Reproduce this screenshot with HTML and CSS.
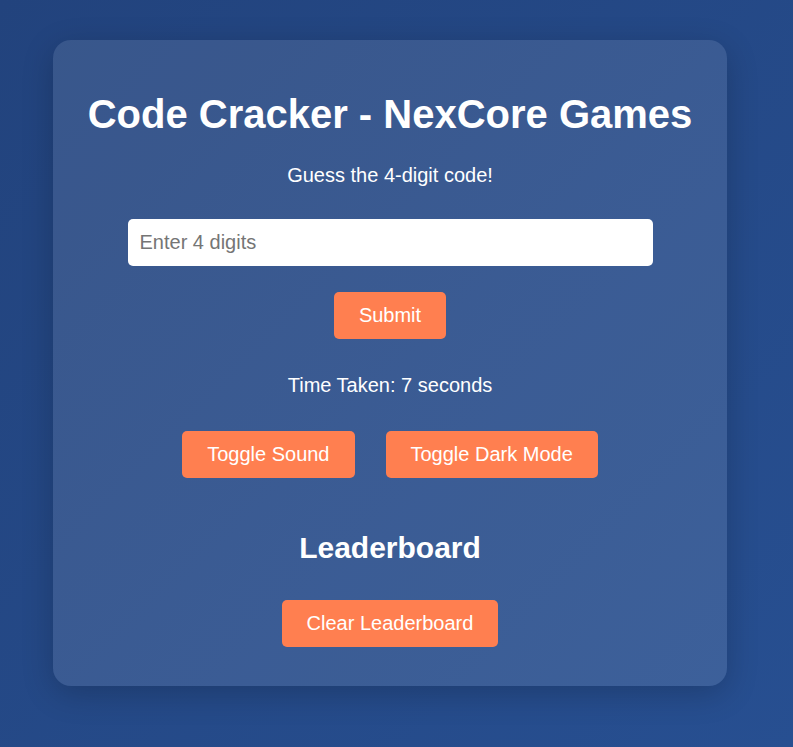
FILE: index.html
```html
<!DOCTYPE html>
<html lang="en">
<head>
<meta charset="utf-8">
<title>Code Cracker - NexCore Games</title>
<link rel="stylesheet" href="styles.css">
</head>
<body>
<div class="card">
  <h1 class="title">Code Cracker - NexCore Games</h1>
  <p class="subtitle">Guess the 4-digit code!</p>
  <input class="code-input" type="text" placeholder="Enter 4 digits">
  <div class="row row-submit">
    <button class="btn">Submit</button>
  </div>
  <p class="timer">Time Taken: 7 seconds</p>
  <div class="row row-toggles">
    <button class="btn">Toggle Sound</button>
    <button class="btn">Toggle Dark Mode</button>
  </div>
  <h2 class="board-title">Leaderboard</h2>
  <div class="row row-clear">
    <button class="btn">Clear Leaderboard</button>
  </div>
</div>
</body>
</html>
```
FILE: styles.css
```css
html {
  background: linear-gradient(135deg, #22437d 0%, #274f91 100%);
  min-height: 100%;
}
body {
  margin: 0;
  padding: 40px 0 0 53px;
  min-height: 747px;
  box-sizing: border-box;
  font-family: "Liberation Sans", Arial, sans-serif;
  font-size: 20px;
  color: #ffffff;
}
.card {
  width: 674px;
  box-sizing: border-box;
  padding: 25px 25px 25px;
  background: rgba(255, 255, 255, 0.1);
  border-radius: 18px;
  box-shadow: 0 8px 32px rgba(0, 0, 0, 0.2);
  text-align: center;
  display: flex;
  flex-direction: column;
  align-items: center;
}
.title {
  font-size: 40px;
  font-weight: bold;
  line-height: 46px;
  margin: 26px 0 27px;
}
.subtitle, .timer {
  margin: 0;
  font-size: 20px;
  line-height: 23px;
}
.code-input {
  margin-top: 32px;
  width: 525px;
  height: 47px;
  box-sizing: border-box;
  padding: 0 12px;
  border: none;
  border-radius: 5px;
  font-family: inherit;
  font-size: 20px;
  color: #333;
  background: #fff;
  outline: none;
}
.code-input::placeholder {
  color: #757575;
}
.row {
  display: flex;
  justify-content: center;
  gap: 31px;
}
.row-submit { margin-top: 26px; }
.timer { margin-top: 35px; }
.row-toggles { margin-top: 34px; }
.board-title {
  font-size: 30px;
  font-weight: bold;
  line-height: 34px;
  margin: 53px 0 0;
}
.row-clear { margin-top: 35px; margin-bottom: 14px; }
.btn {
  font-family: inherit;
  font-size: 20px;
  line-height: 23px;
  padding: 12px 25px;
  border: none;
  border-radius: 5px;
  background: #ff7f50;
  color: #fff;
  cursor: pointer;
}
```
